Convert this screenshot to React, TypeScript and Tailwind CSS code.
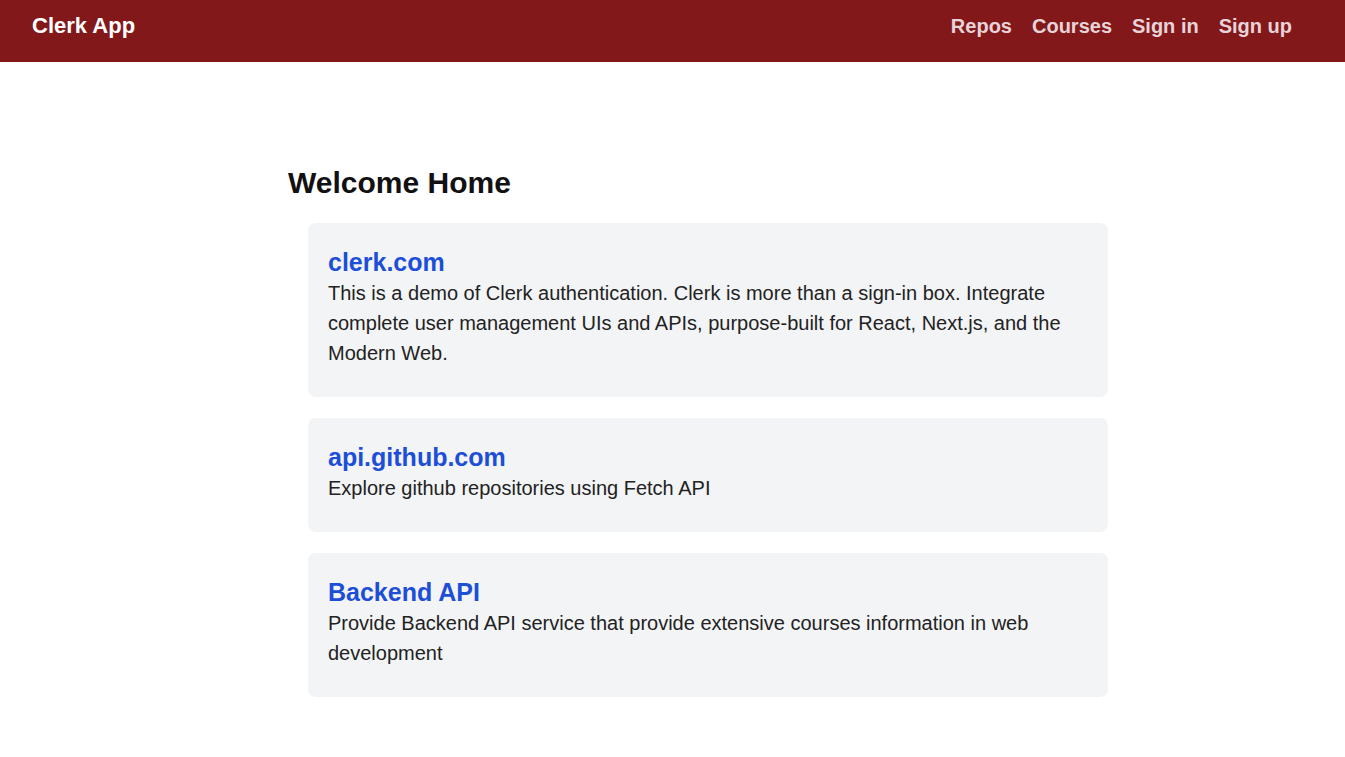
const cards = [
  {
    title: "clerk.com",
    description:
      "This is a demo of Clerk authentication. Clerk is more than a sign-in box. Integrate complete user management UIs and APIs, purpose-built for React, Next.js, and the Modern Web.",
  },
  {
    title: "api.github.com",
    description: "Explore github repositories using Fetch API",
  },
  {
    title: "Backend API",
    description:
      "Provide Backend API service that provide extensive courses information in web development",
  },
];

const links = ["Repos", "Courses", "Sign in", "Sign up"];

export default function App() {
  return (
    <div className="min-h-screen bg-white font-['Liberation_Sans',Arial,sans-serif]">
      <header className="h-[62px] bg-[#82181a] flex items-start justify-between pl-8 pr-[53px] pt-[12px]">
        <a href="#" className="text-[22px] leading-[28px] font-bold text-white">
          Clerk App
        </a>
        <nav className="flex gap-5">
          {links.map((link) => (
            <a key={link} href="#" className="text-xl leading-7 font-bold text-[#e8d4d8]">
              {link}
            </a>
          ))}
        </nav>
      </header>

      <main className="ml-[288px] w-[840px] pt-[103px] pb-10">
        <h1 className="text-3xl leading-9 font-bold text-[#111] mb-[22px]">Welcome Home</h1>
        <div className="flex flex-col gap-[21px] ml-5">
          {cards.map((card) => (
            <div key={card.title} className="w-[800px] bg-gray-100 rounded-lg px-5 pt-[23px] pb-[29px]">
              <a href="#" className="block text-[25px] leading-8 font-bold text-[#1d4ed8]">
                {card.title}
              </a>
              <p className="text-xl leading-[30px] text-[#222]">{card.description}</p>
            </div>
          ))}
        </div>
      </main>
    </div>
  );
}
